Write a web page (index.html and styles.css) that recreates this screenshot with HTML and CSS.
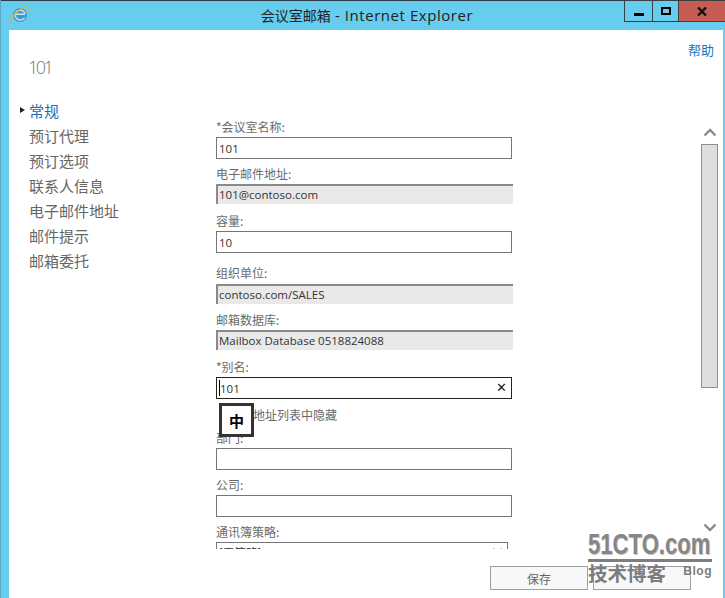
FILE: index.html
```html
<!DOCTYPE html>
<html lang="zh">
<head>
<meta charset="utf-8">
<title>会议室邮箱 - Internet Explorer</title>
<link rel="stylesheet" href="styles.css">
</head>
<body>
<div class="window">
  <header class="titlebar">
    <svg class="ie-icon" width="20" height="20" viewBox="0 0 20 20">
      <circle cx="10" cy="9" r="7" fill="#3f97d6"/>
      <path d="M4.800 8.200h10.400M14.800 7.800c-.4-2.400-2.400-3.500-4.700-3.500-2.700 0-4.900 2-4.900 4.800s2.100 4.800 5 4.800c1.900 0 3.400-.7 4.400-2" fill="none" stroke="#bfe4f7" stroke-width="1.500"/>
      <path d="M1.200 17C.2 14.500 5.500 5.500 11.500 2.500c3.500-1.700 6.500-2 6.500.5 0 1-.6 2.300-1.500 3.500" fill="none" stroke="#e3b320" stroke-width="1.300"/>
    </svg>
    <div class="title"><span class="title-cjk">会议室邮箱</span> <span class="title-latin">- Internet Explorer</span></div>
    <div class="controls">
      <div class="ctl ctl-min"><span class="min-bar"></span></div>
      <div class="ctl ctl-max"><span class="max-box"></span></div>
      <div class="ctl ctl-close">
        <svg width="10" height="9" viewBox="0 0 10 9"><path d="M1 .5l8 8M9 .5l-8 8" stroke="#111" stroke-width="2.400"/></svg>
      </div>
    </div>
  </header>

  <main class="content">
    <a class="help">帮助</a>
    <h1 class="page-title">101</h1>
    <div class="columns">
      <nav class="nav">
        <div class="nav-item active"><span class="nav-arrow"></span>常规</div>
        <div class="nav-item">预订代理</div>
        <div class="nav-item">预订选项</div>
        <div class="nav-item">联系人信息</div>
        <div class="nav-item">电子邮件地址</div>
        <div class="nav-item">邮件提示</div>
        <div class="nav-item">邮箱委托</div>
      </nav>
      <form class="form">
        <label class="lbl">*会议室名称:</label>
        <div class="box">101</div>
        <label class="lbl">电子邮件地址:</label>
        <div class="box readonly">101@contoso.com</div>
        <label class="lbl lbl-after-ro">容量:</label>
        <div class="box">10</div>
        <label class="lbl lbl-org">组织单位:</label>
        <div class="box readonly box-low">contoso.com/SALES</div>
        <label class="lbl lbl-db">邮箱数据库:</label>
        <div class="box readonly">Mailbox Database 0518824088</div>
        <label class="lbl lbl-after-ro">*别名:</label>
        <div class="box focus"><span class="caret"></span>101<span class="clear">✕</span></div>
        <div class="check-row"><span class="check"></span>在地址列表中隐藏</div>
        <label class="lbl">部门:</label>
        <div class="box"></div>
        <label class="lbl">公司:</label>
        <div class="box"></div>
        <label class="lbl">通讯簿策略:</label>
        <div class="box select">[无策略]<svg class="sel-arrow" width="9" height="6" viewBox="0 0 9 6"><path d="M1 .5L4.500 5 8 .5" fill="none" stroke="#444" stroke-width="1"/></svg></div>
      </form>
      <div class="scrollbar">
        <svg class="arrow" width="14" height="9" viewBox="0 0 14 9"><path d="M1.500 7.500L7 2l5.500 5.500" fill="none" stroke="#8a8a8a" stroke-width="2.400"/></svg>
        <div class="thumb"></div>
        <svg class="arrow arrow-down" width="14" height="9" viewBox="0 0 14 9"><path d="M1.500 1.500L7 7l5.500-5.500" fill="none" stroke="#8a8a8a" stroke-width="2.400"/></svg>
      </div>
    </div>
    <footer class="footer">
      <button class="btn" type="button">保存</button>
      <button class="btn" type="button"></button>
    </footer>
  </main>

  <div class="ime">中</div>
  <div class="watermark">
    <div class="wm-main">51CTO.com</div>
    <div class="wm-bar"></div>
    <div class="wm-sub"><span>技术博客</span><span class="wm-blog">Blog</span></div>
  </div>
</div>
</body>
</html>
```
FILE: styles.css
```css
* { box-sizing: border-box; }
html, body { margin: 0; padding: 0; height: 100%; }
body { font-family: "Open Sans", "Noto Sans CJK SC", sans-serif; background: #67cdee; overflow: hidden; }

.window { position: relative; width: 725px; height: 598px; display: flex; flex-direction: column; border-left: 1px solid #5aa6c6; overflow: hidden; }

.titlebar { height: 30px; flex: none; display: flex; align-items: flex-start; background: #67cdee; border-top: 1px solid #2c3a45; border-left: 1px solid #2b5f86; margin-left: -1px; position: relative; }
.ie-icon { margin: 5px 0 0 9px; flex: none; }
.title { position: absolute; left: 0; right: 0; top: 4px; text-align: center; line-height: 20px; color: #222; white-space: nowrap; padding-left: 8px; }
.title-cjk { font-size: 14px; font-family: "Noto Sans CJK SC", sans-serif; }
.title-latin { font-size: 15px; letter-spacing: 0.55px; font-family: "Open Sans", sans-serif; }
.controls { margin-left: auto; display: flex; height: 22px; margin-top: -1px; position: relative; border: 1px solid #3a3f44; border-right: 0; }
.ctl { display: flex; align-items: center; justify-content: center; height: 100%; }
.ctl-min { width: 28px; border-right: 1px solid #3a3f44; }
.ctl-max { width: 26px; border-right: 1px solid #3a3f44; }
.ctl-close { width: 46px; background: #c75c52; }
.min-bar { width: 10px; height: 3px; background: #000; margin-top: 6px; }
.max-box { width: 10px; height: 8px; border: 2px solid #000; }

.content { flex: 1; min-height: 0; margin: 0 2px 0 8px; background: #fefffe; display: flex; flex-direction: column; box-shadow: 0 -1px 0 #8fb5cc; }
.help { align-self: flex-end; font-size: 13px; line-height: 16px; color: #1a74c2; margin: 12px 9px 0 0; font-family: "Noto Sans CJK SC", sans-serif; }
.page-title { margin: -2px 0 0 19px; font-size: 18px; line-height: 22px; font-weight: 300; letter-spacing: -2.500px; color: #777; font-family: "Open Sans", sans-serif; }

.columns { flex: 1; min-height: 0; display: flex; margin-top: 20px; }
.nav { width: 207px; flex: none; }
.nav-item { position: relative; padding-left: 20px; font-size: 15px; line-height: 25px; color: #666; font-family: "Noto Sans CJK SC", sans-serif; }
.nav-item.active { color: #1a6db5; }
.nav-arrow { position: absolute; left: 11px; top: 9px; border-left: 5px solid #222; border-top: 3.500px solid transparent; border-bottom: 3.500px solid transparent; }

.form { width: 297px; flex: none; height: 451px; overflow: hidden; padding-top: 21px; }
.lbl { display: block; font-size: 12px; line-height: 16px; height: 16px; margin-top: 7px; color: #6a6a6a; font-family: "Noto Sans CJK SC", sans-serif; }
.form > .lbl:first-child { margin-top: 0; }
.lbl-after-ro { margin-top: 9px; }
.lbl-org { margin-top: 12px; }
.lbl-db { margin-top: 8px; }
.box { display: block; position: relative; width: 296px; height: 22px; margin-top: 2px; border: 1px solid #767676; padding: 0 2px; font-size: 11.500px; line-height: 21px; color: #333; background: #fff; white-space: nowrap; }
.readonly { width: 297px; height: 20px; background: #e9e9e9; border-width: 2px 0 0 2px; border-color: #8a8a8a; line-height: 17px; padding-left: 1px; }
.box-low { margin-top: 3px; }
.focus { border-color: #222; padding-left: 3px; }
.caret { position: absolute; left: 2px; top: 2px; width: 1px; height: 16px; background: #000; }
.clear { position: absolute; right: 4px; top: 0; font-size: 13px; line-height: 20px; color: #222; font-family: "DejaVu Sans", sans-serif; }
.check-row { display: flex; align-items: center; height: 16px; margin-top: 8px; font-size: 12px; line-height: 16px; color: #6a6a6a; font-family: "Noto Sans CJK SC", sans-serif; }
.check { width: 13px; height: 13px; border: 1px solid #767676; margin: 0 8px 0 4px; flex: none; }
.select { width: 292px; line-height: 18px; font-family: "Noto Sans CJK SC", sans-serif; }
.sel-arrow { position: absolute; right: 5px; top: 5px; }

.scrollbar { flex: none; width: 17px; margin-left: 188px; display: flex; flex-direction: column; align-items: center; height: 451px; padding-top: 30px; }
.arrow { flex: none; }
.thumb { width: 17px; height: 244px; margin-top: 7px; background: #dedede; border: 1px solid #8f8f8f; }
.arrow-down { margin-top: 135px; }

.footer { flex: none; display: flex; gap: 5px; padding: 0 0 8px 481px; }
.btn { width: 98px; height: 24px; border: 1px solid #9aa0a4; background: #f8f8f8; font-size: 12px; color: #666; padding: 0; font-family: "Noto Sans CJK SC", sans-serif; }

.ime { position: absolute; left: 218px; top: 403px; width: 35px; height: 34px; border: 3px solid #333; background: #fdfdfd; display: flex; align-items: center; justify-content: center; font-size: 15px; font-weight: 700; color: #000; font-family: "Noto Sans CJK SC", sans-serif; }

.watermark { position: absolute; left: 587px; top: 529px; width: 124px; pointer-events: none; }
.wm-main { font-family: "Liberation Sans", sans-serif; font-weight: 700; font-size: 30px; line-height: 30px; color: #868686; text-shadow: 1px 1px 0 #c4c4c4; white-space: nowrap; transform: scaleX(0.737); transform-origin: left center; }
.wm-bar { height: 3px; background: #7e7e7e; }
.wm-sub { display: flex; justify-content: space-between; margin-top: -1px; font-family: "Noto Sans CJK SC", sans-serif; font-weight: 700; font-size: 19.500px; line-height: 24px; color: #7d7d7d; }
.wm-blog { font-family: "Liberation Sans", sans-serif; font-size: 12px; line-height: 14px; letter-spacing: 0.5px; margin-top: 3px; }
```
